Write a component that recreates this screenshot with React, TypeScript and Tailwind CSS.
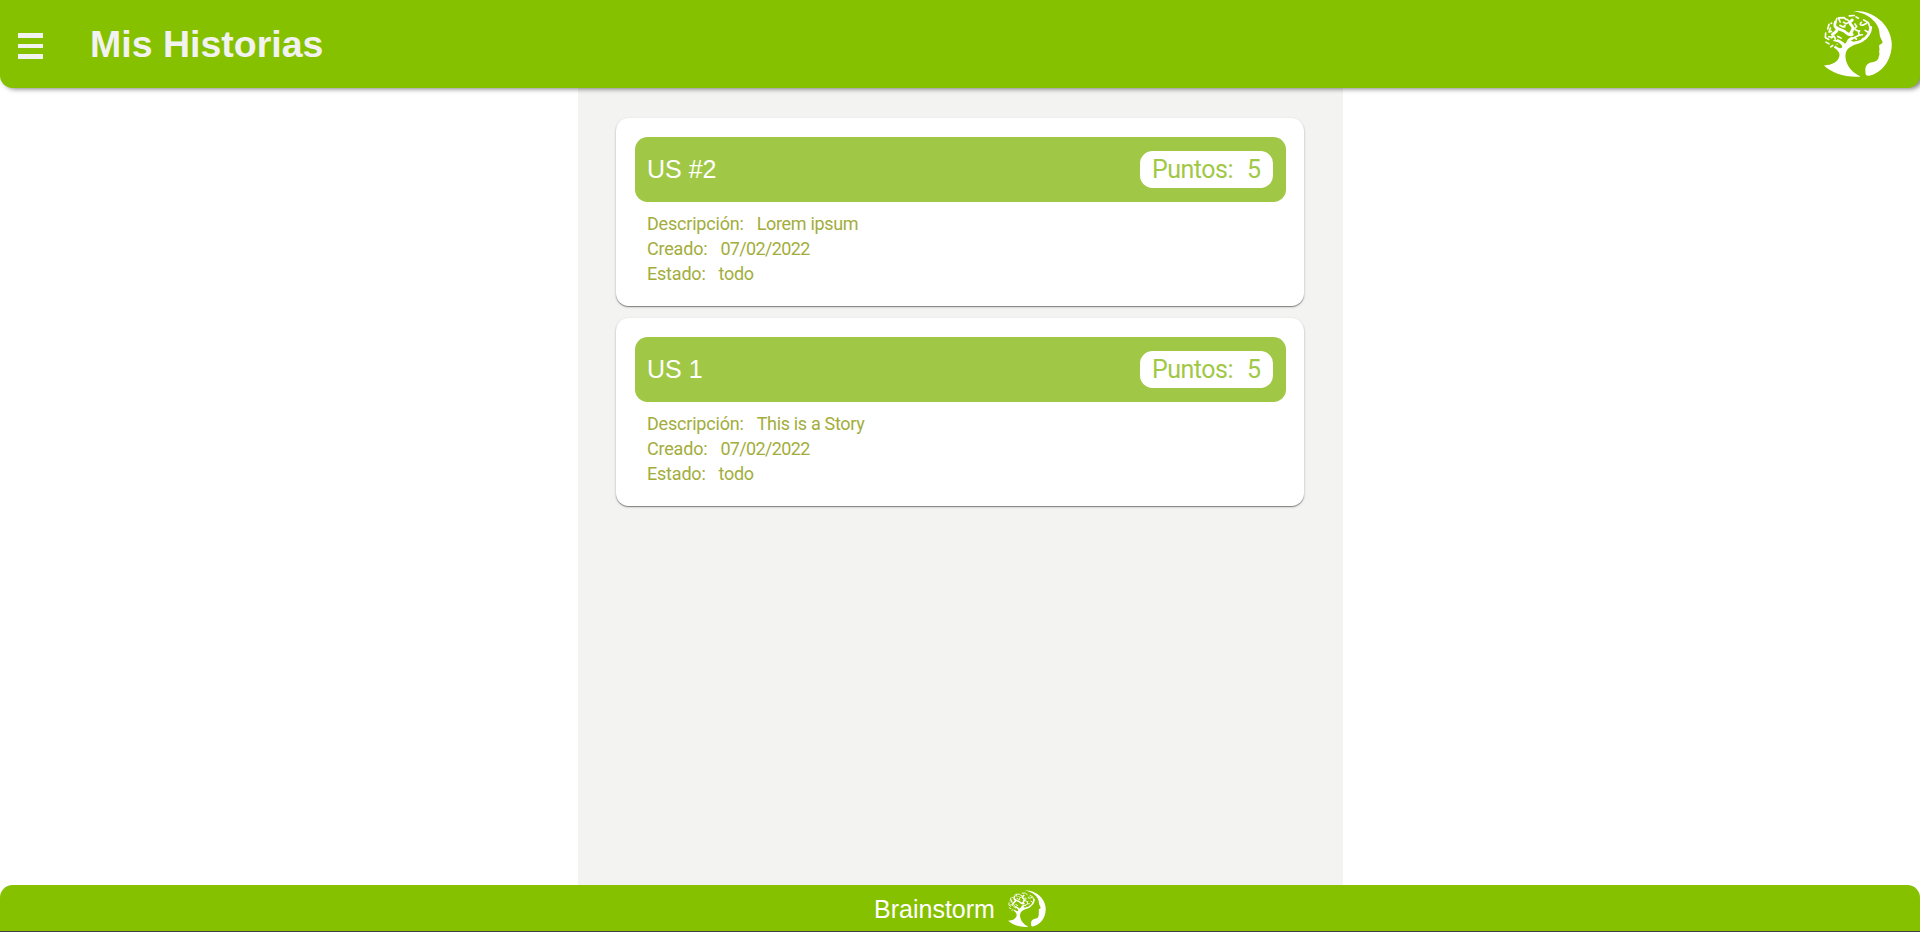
const LOGO_OUTLINE = [
  "M101 10C151 4 210 43 215 102C218 151 188 194 147 202C139 203 137 198 137 190C136 178 138 171 145 166C151 161 162 162 170 157C178 152 175 147 178 141C180 137 177 132 178 128C180 121 177 117 178 112C180 107 188 107 188 102C187 96 179 87 179 77C180 45 143 14 101 10Z",
  "M14 171C38 171 57 161 60 142C61 131 52 124 43 118L48 112C56 120 64 123 68 117C70 111 60 103 49 99L54 93C65 98 73 103 77 108C86 107 84 99 93 96L101 101C111 99 120 98 129 92L133 98C123 107 107 107 97 114C82 121 77 130 78 148C81 174 99 193 123 204C80 208 36 193 14 171Z",
];

const THICK_BRANCHES = [
  "M48 42C44 52 45 57 54 61L73 69C82 74 88 84 98 79",
  "M52 60C57 71 46 72 39 79",
  "M98 36C89 42 90 49 97 53C104 60 98 69 91 78",
  "M129 95C143 87 151 76 153 58",
  "M80 109C89 103 83 94 98 91",
];

const THIN_BRANCHES = [
  "M29 49L25 63M36 70L29 72L33 60M19 75L18 88L28 94M20 102L29 107M38 87L28 86M34 116L40 112M48 93L44 84L36 89",
  "M52 32L50 39M58 33L62 42M57 30L74 29L79 35M72 43L80 47L91 42L82 34M89 24L104 23M109 27L116 31",
  "M61 52L71 57L77 51M98 91C112 86 116 79 128 80M118 80L116 69L107 65",
  "M125 43C118 49 123 54 132 50L141 46M132 36L146 44L150 58M136 67L144 72M105 88L110 93M101 65L111 56L106 48",
  "M44 97L56 99M55 85L65 90",
];

function TreeLogo({ className }: { className: string }) {
  return (
    <svg viewBox="14 7 202 198" className={className} fill="white" aria-hidden="true">
      {LOGO_OUTLINE.map((d) => (
        <path key={d} d={d} />
      ))}
      <g fill="none" stroke="white" strokeLinecap="round" strokeLinejoin="round">
        {THICK_BRANCHES.map((d) => (
          <path key={d} d={d} strokeWidth="8.5" />
        ))}
        {THIN_BRANCHES.map((d) => (
          <path key={d} d={d} strokeWidth="4.8" />
        ))}
      </g>
      <circle cx="36" cy="46" r="3" />
      <circle cx="75" cy="56" r="3" />
      <circle cx="119" cy="69" r="3" />
      <circle cx="53" cy="108" r="2" />
    </svg>
  );
}

type Story = { title: string; points: number; description: string; created: string; status: string };

const stories: Story[] = [
  { title: "US #2", points: 5, description: "Lorem ipsum", created: "07/02/2022", status: "todo" },
  { title: "US 1", points: 5, description: "This is a Story", created: "07/02/2022", status: "todo" },
];

function Field({ label, value, tracking = "tracking-[-0.32px]" }: { label: string; value: string; tracking?: string }) {
  return (
    <p className="flex gap-[13px]">
      <span className="tracking-[-0.2px]">{label}</span>
      <span className={tracking}>{value}</span>
    </p>
  );
}

function StoryCard({ story }: { story: Story }) {
  return (
    <article className="h-[188px] rounded-[12.5px] bg-white pt-[19px] pr-[18px] pl-[19px] shadow-[0_1px_1px_rgba(0,0,0,0.4),0_1px_3px_rgba(0,0,0,0.16)]">
      <div className="flex h-[65px] items-center justify-between rounded-[12.5px] bg-[#a0c846] pr-[13px] pl-[12px] text-[25px]">
        <h2 className="text-white">{story.title}</h2>
        <div className="flex h-[37px] w-[133px] items-center justify-between rounded-[12.5px] bg-white px-[12px] font-[Roboto,sans-serif] text-[#a0c846]">
          <span className="tracking-[-0.5px]">Puntos:</span>
          <span>{story.points}</span>
        </div>
      </div>
      <div className="px-[12px] pt-[9px] font-[Roboto,sans-serif] text-[18px] leading-[25px] text-[#a2ad3b]">
        <Field label="Descripción:" value={story.description} />
        <Field label="Creado:" value={story.created} tracking="tracking-[-0.65px]" />
        <Field label="Estado:" value={story.status} />
      </div>
    </article>
  );
}

export default function App() {
  return (
    <div className="flex h-[932px] flex-col overflow-hidden bg-white font-['Liberation_Sans',Arial,sans-serif]">
      <header className="z-10 flex h-[88px] shrink-0 items-center rounded-b-[12.5px] bg-[#86c100] pr-[28px] pl-[18px] shadow-[3px_1px_5px_rgba(0,0,0,0.5)]">
        <button className="mt-[4px] flex w-[25px] flex-col gap-[6px]" aria-label="Menu">
          <span className="h-[5px] bg-[#f2f2f0]" />
          <span className="h-[4px] bg-[#f2f2f0]" />
          <span className="h-[5px] bg-[#f2f2f0]" />
        </button>
        <h1 className="ml-[47px] text-[37.5px] font-bold text-[#f2f2f0]">Mis Historias</h1>
        <TreeLogo className="mb-[1px] ml-auto h-[67px] w-[68px]" />
      </header>
      <main className="mr-[577px] ml-[578px] flex flex-1 flex-col gap-[12px] bg-[#f3f3f1] pt-[30px] pr-[39px] pl-[38px]">
        {stories.map((story) => (
          <StoryCard key={story.title} story={story} />
        ))}
      </main>
      <footer className="flex h-[46px] shrink-0 items-center justify-center gap-[13px] rounded-t-[12.5px] bg-[#86c100] text-[25px] text-white">
        <span className="pt-[3px]">Brainstorm</span>
        <TreeLogo className="h-[37px] w-[38px]" />
      </footer>
      <div className="h-px shrink-0 bg-[#404040]" />
    </div>
  );
}
